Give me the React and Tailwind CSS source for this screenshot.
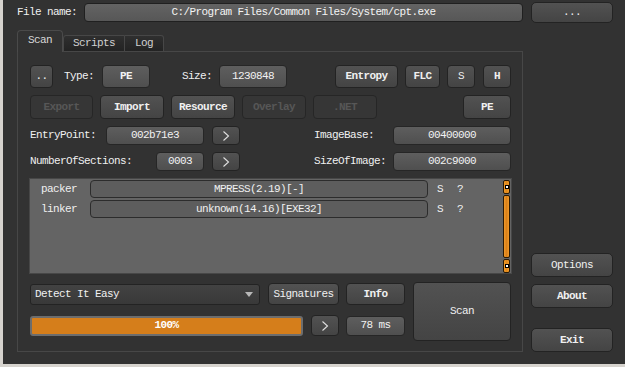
import React from "react";

const base = "flex items-center justify-center rounded-[4px] border shrink-0";
const btn = `${base} border-[#232323] bg-linear-to-b from-[#525252] to-[#444444] text-[#f0f0f0]`;
const val = `${base} border-[#262626] bg-linear-to-b from-[#5e5e5e] to-[#4f4f4f] text-[#f2f2f2]`;
const dis = `${base} border-[#262626] bg-[#363636] text-[#575757]`;

const Chevron = () => (
  <svg width="8" height="12" viewBox="0 0 8 12">
    <polyline points="1.5,1.5 6.5,6 1.5,10.5" fill="none" stroke="#e0e0e0" strokeWidth="1.1" />
  </svg>
);

const ScrollCap = () => (
  <div className="h-[14px] w-[7px] rounded-[2px] border border-[#2a1a05] bg-linear-to-r from-[#f39a28] via-[#e0891a] to-[#f39a28] flex items-center justify-center">
    <div className="w-[4px] h-[4px] bg-white border border-black"></div>
  </div>
);

export default function App() {
  return (
    <div className="w-[625px] h-[367px] bg-[#323232] border-l-[3px] border-b-[3px] border-[#d6d3ce] flex font-['Liberation_Mono',monospace] text-[11px] tracking-[-0.6px] text-[#f0f0f0] overflow-hidden">
      {/* left column */}
      <div className="w-[520px] pl-[14px] pt-[2px] flex flex-col">
        <div className="h-[21px] flex items-center">
          <span className="w-[67px]">File name:</span>
          <div className="w-[439px] h-[19px] rounded-[4px] border border-[#202020] bg-linear-to-b from-[#636363] to-[#575757] flex items-center justify-center text-[#f4f4f4]">
            C:/Program Files/Common Files/System/cpt.exe
          </div>
        </div>

        {/* tabs */}
        <div className="mt-[7px] h-[22px] flex items-end relative z-10 -mb-px">
          <div className="w-[46px] h-[22px] border border-b-0 border-[#4a4a4a] rounded-t-[4px] bg-[#323232] flex items-center justify-center pb-[2px] text-[#d8d8d8]">
            Scan
          </div>
          <div className="w-[62px] h-[17px] border border-[#474747] rounded-tl-[3px] bg-linear-to-b from-[#2f2f2f] to-[#232323] flex items-center justify-center text-[#d0d0d0]">
            Scripts
          </div>
          <div className="w-[39px] h-[17px] border border-l-0 border-[#474747] rounded-tr-[3px] bg-linear-to-b from-[#2f2f2f] to-[#232323] flex items-center justify-center text-[#d0d0d0]">
            Log
          </div>
        </div>

        {/* pane */}
        <div className="w-[506px] h-[301px] border border-[#474747] pl-[12px] pr-[11px] pt-[13px] flex flex-col">
          {/* row 1 */}
          <div className="h-[23px] flex items-center">
            <div className={`${btn} w-[23px] h-[23px]`}>..</div>
            <span className="w-[49px] pl-[11px] shrink-0">Type:</span>
            <div className={`${val} w-[48px] h-[23px] font-bold`}>PE</div>
            <span className="ml-[32px] w-[37px] shrink-0">Size:</span>
            <div className={`${val} w-[68px] h-[23px]`}>1230848</div>
            <div className="ml-auto flex items-center">
              <div className={`${btn} w-[63px] h-[23px] font-bold`}>Entropy</div>
              <div className={`${btn} ml-[7px] w-[35px] h-[23px] font-bold`}>FLC</div>
              <div className={`${btn} ml-[7px] w-[28px] h-[23px]`}>S</div>
              <div className={`${btn} ml-[8px] w-[28px] h-[23px] font-bold`}>H</div>
            </div>
          </div>

          {/* row 2 */}
          <div className="mt-[7px] h-[24px] flex items-center">
            <div className={`${dis} w-[63px] h-[24px] font-bold`}>Export</div>
            <div className={`${btn} ml-[7px] w-[64px] h-[24px] font-bold`}>Import</div>
            <div className={`${btn} ml-[7px] w-[64px] h-[24px] font-bold`}>Resource</div>
            <div className={`${dis} ml-[7px] w-[64px] h-[24px] font-bold`}>Overlay</div>
            <div className={`${dis} ml-[7px] w-[64px] h-[24px] font-bold`}>.NET</div>
            <div className={`${btn} ml-auto w-[48px] h-[24px] font-bold`}>PE</div>
          </div>

          {/* row 3 */}
          <div className="mt-[7px] h-[19px] flex items-center">
            <span className="w-[76px] shrink-0">EntryPoint:</span>
            <div className={`${val} w-[98px] h-[19px]`}>002b71e3</div>
            <div className={`${btn} ml-[8px] w-[28px] h-[19px]`}><Chevron /></div>
            <span className="ml-[74px] w-[79px] shrink-0">ImageBase:</span>
            <div className={`${val} w-[118px] h-[19px]`}>00400000</div>
          </div>

          {/* row 4 */}
          <div className="mt-[7px] h-[19px] flex items-center">
            <span className="w-[126px] shrink-0">NumberOfSections:</span>
            <div className={`${val} w-[48px] h-[19px]`}>0003</div>
            <div className={`${btn} ml-[8px] w-[28px] h-[19px]`}><Chevron /></div>
            <span className="ml-[74px] w-[79px] shrink-0">SizeOfImage:</span>
            <div className={`${val} w-[118px] h-[19px]`}>002c9000</div>
          </div>

          {/* results */}
          <div className="mt-[7px] -ml-px w-[483px] h-[96px] border border-[#474747] bg-[#646464] flex">
            <div className="flex-1 flex flex-col pt-[1px] pl-[11px] gap-[2px]">
              <div className="h-[18px] flex items-center">
                <span className="w-[49px] shrink-0">packer</span>
                <div className="w-[338px] h-[18px] rounded-[4px] border border-[#2c2c2c] bg-[#5d5d5d] flex items-center justify-center">MPRESS(2.19)[-]</div>
                <span className="ml-[9px] w-[20px]">S</span>
                <span>?</span>
              </div>
              <div className="h-[18px] flex items-center">
                <span className="w-[49px] shrink-0">linker</span>
                <div className="w-[338px] h-[18px] rounded-[4px] border border-[#2c2c2c] bg-[#5d5d5d] flex items-center justify-center">unknown(14.16)[EXE32]</div>
                <span className="ml-[9px] w-[20px]">S</span>
                <span>?</span>
              </div>
            </div>
            <div className="w-[7px] mr-[1px] pt-[1px] flex flex-col gap-[1px]">
              <ScrollCap />
              <div className="flex-1 w-[7px] rounded-[2px] border border-[#2a1a05] bg-linear-to-r from-[#f39a28] via-[#d8801a] to-[#f39a28]"></div>
              <ScrollCap />
            </div>
          </div>

          {/* bottom */}
          <div className="mt-[8px] flex">
            <div className="w-[375px] pt-[1px] flex flex-col">
              <div className="h-[22px] flex items-center">
                <div className="w-[230px] h-[21px] rounded-[3px] border border-[#232323] bg-linear-to-b from-[#424242] to-[#393939] flex items-center pl-[4px] pr-[6px]">
                  <span className="flex-1">Detect It Easy</span>
                  <svg width="8" height="5" viewBox="0 0 8 5"><polygon points="0,0 8,0 4,5" fill="#b8b8b8" /></svg>
                </div>
                <div className={`${btn} ml-[8px] w-[71px] h-[22px]`}>Signatures</div>
                <div className={`${btn} ml-[7px] w-[59px] h-[22px] font-bold`}>Info</div>
              </div>
              <div className="mt-[10px] h-[21px] flex items-center">
                <div className="w-[273px] h-[20px] rounded-[3px] border-2 border-[#6d6d6d] bg-[#d57e1b] flex items-center justify-center text-white font-bold">
                  100%
                </div>
                <div className={`${btn} ml-[8px] w-[28px] h-[21px]`}><Chevron /></div>
                <div className={`${val} ml-[7px] w-[59px] h-[20px]`}>78 ms</div>
              </div>
            </div>
            <div className={`${btn} ml-[8px] w-[98px] h-[59px] from-[#484848] to-[#3c3c3c]`}>Scan</div>
          </div>
        </div>
      </div>

      {/* right column */}
      <div className="ml-[8px] w-[82px] pt-[2px] pb-[12px] flex flex-col">
        <div className={`${btn} w-[82px] h-[21px] rounded-[5px] from-[#4a4a4a] to-[#444444]`}>...</div>
        <div className="flex-1"></div>
        <div className={`${btn} w-[82px] h-[24px] rounded-[5px] from-[#4a4a4a] to-[#424242]`}>Options</div>
        <div className={`${btn} mt-[7px] w-[82px] h-[24px] rounded-[5px] from-[#4a4a4a] to-[#424242] font-bold`}>About</div>
        <div className={`${btn} mt-[20px] w-[82px] h-[24px] rounded-[5px] from-[#4a4a4a] to-[#424242] font-bold`}>Exit</div>
      </div>
    </div>
  );
}
